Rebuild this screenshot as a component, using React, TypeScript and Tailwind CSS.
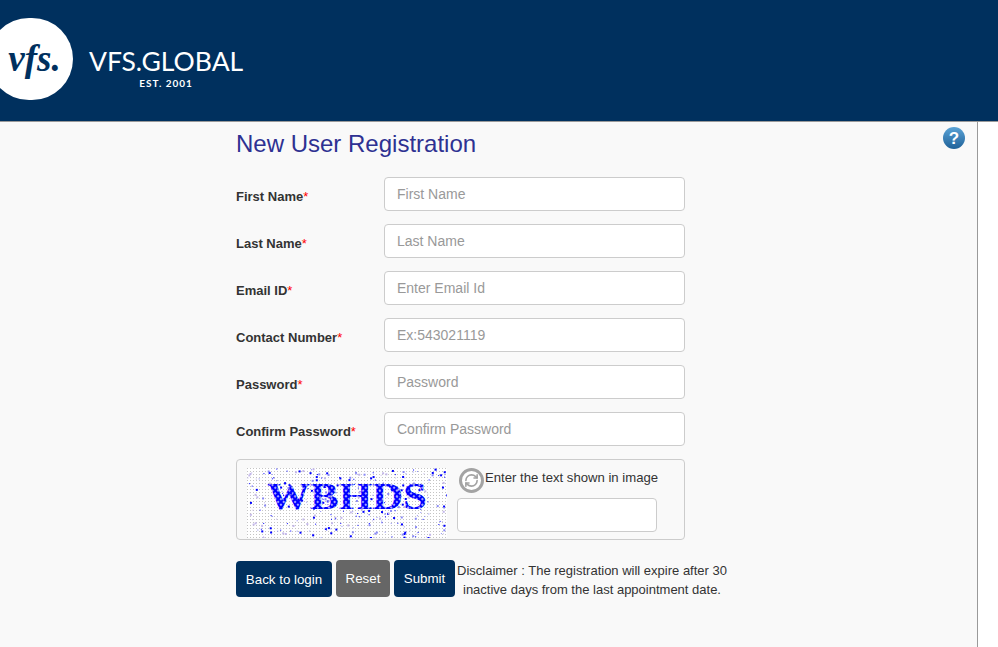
import { RefreshCw } from "lucide-react";

const fields = [
  { label: "First Name", placeholder: "First Name" },
  { label: "Last Name", placeholder: "Last Name" },
  { label: "Email ID", placeholder: "Enter Email Id" },
  { label: "Contact Number", placeholder: "Ex:543021119" },
  { label: "Password", placeholder: "Password" },
  { label: "Confirm Password", placeholder: "Confirm Password" },
];

// fixed noise for the captcha picture
function speckles() {
  let seed = 0x2f6e2b1;
  const next = () => {
    seed = (seed + 0x6d2b79f5) | 0;
    let t = Math.imul(seed ^ (seed >>> 15), 1 | seed);
    t = (t + Math.imul(t ^ (t >>> 7), 61 | t)) ^ t;
    return ((t ^ (t >>> 14)) >>> 0) / 4294967296;
  };
  return Array.from({ length: 330 }, () => ({
    x: next() * 200,
    y: next() * 70,
    size: next() > 0.55 ? 2 : 1,
    color: next() > 0.5 ? "#0000ff" : next() > 0.5 ? "#8a8af5" : "#c4b8ea",
  }));
}

function Captcha() {
  return (
    <svg width="200" height="70" viewBox="0 0 200 70" className="block">
      <defs>
        <pattern id="grain" width="3" height="3" patternUnits="userSpaceOnUse">
          <rect width="3" height="3" fill="#ffffff" />
          <rect width="1" height="1" fill="#c4c4c4" />
        </pattern>
        <pattern id="letters" width="4" height="4" patternUnits="userSpaceOnUse" patternTransform="rotate(45)">
          <rect width="4" height="4" fill="#0000ff" />
          <rect x="1.2" y="1.2" width="1.6" height="1.6" fill="#ffffff" />
        </pattern>
      </defs>
      <rect width="200" height="70" fill="url(#grain)" />
      <text
        x="20"
        y="41"
        fill="url(#letters)"
        fontFamily="'Liberation Serif', serif"
        fontWeight="700"
        fontSize="37"
        textLength="160"
        lengthAdjust="spacingAndGlyphs"
      >
        WBHDS
      </text>
      {speckles().map((s, i) => (
        <rect key={i} x={s.x} y={s.y} width={s.size} height={s.size} fill={s.color} />
      ))}
    </svg>
  );
}

export default function App() {
  return (
    <div className="min-h-[647px] bg-white font-['Liberation_Sans',Arial,sans-serif] text-[#333333]">
      <header className="flex h-[122px] items-center border-b border-[#9a9a9a] bg-[#00305e]">
        <div className="mt-[-4px] ml-[-12px] flex h-[82px] w-[85px] shrink-0 items-center justify-center rounded-full bg-white pl-2">
          <span className="font-['Liberation_Serif',serif] text-[37px] leading-none font-bold text-[#00305e] italic">
            vfs.
          </span>
        </div>
        <div className="ml-[16px] flex flex-col items-center pt-[14px] text-white">
          <span className="font-['Lato',sans-serif] text-[26.5px] leading-[30px] font-normal">VFS.GLOBAL</span>
          <span className="mt-[2px] font-['Lato',sans-serif] text-[10px] leading-[11px] font-bold tracking-[1px]">
            EST. 2001
          </span>
        </div>
      </header>

      <main className="relative min-h-[525px] w-[978px] border-r border-[#9a9a9a] bg-[#f9f9f9] pl-[236px]">
        <div className="absolute top-[5px] right-[12px] flex h-[22px] w-[22px] items-center justify-center rounded-full bg-gradient-to-b from-[#5aa3d6] to-[#1f6299] text-[17px] leading-none font-bold text-white">
          ?
        </div>

        <h1 className="pt-[8px] text-[24px] leading-[28px] text-[#2e3192]">New User Registration</h1>

        <form className="mt-[19px] w-[449px]">
          <div className="flex flex-col gap-[13px]">
            {fields.map((f) => (
              <div key={f.label} className="flex h-[34px] items-center">
                <label className="w-[148px] shrink-0 pt-[6px] text-[13px] font-bold">
                  {f.label}
                  <span className="font-normal text-[#ff0000]">*</span>
                </label>
                <input
                  placeholder={f.placeholder}
                  className="h-[34px] w-[301px] rounded border border-[#cccccc] bg-white px-3 text-[14px] placeholder:text-[#999999]"
                />
              </div>
            ))}
          </div>

          <div className="mt-[13px] flex h-[81px] rounded border border-[#cccccc] pt-2 pl-[10px]">
            <Captcha />
            <div className="ml-[10px] flex flex-col">
              <div className="flex items-start">
                <span className="ml-[2px] flex h-[25px] w-[25px] shrink-0 items-center justify-center rounded-full border-[3px] border-[#a3a3a3] bg-white">
                  <RefreshCw size={15} strokeWidth={2.6} className="text-[#a3a3a3]" />
                </span>
                <span className="ml-px text-[13.15px] leading-[20px] whitespace-nowrap">
                  Enter the text shown in image
                </span>
              </div>
              <input className="mt-[5px] h-[34px] w-[200px] rounded border border-[#cccccc] bg-white" />
            </div>
          </div>

          <div className="mt-[20px] flex h-[37px] w-[500px] items-start">
            <button type="button" className="mt-px h-[36px] w-[96px] rounded bg-[#00305e] pt-px text-[13.33px] text-white">
              Back to login
            </button>
            <button type="button" className="ml-1 h-[37px] w-[54px] rounded bg-[#666666] text-[13.33px] text-white">
              Reset
            </button>
            <button type="button" className="ml-1 h-[37px] w-[61px] rounded bg-[#00305e] text-[13.33px] text-white">
              Submit
            </button>
            <p className="mt-px ml-[2px] w-[270px] text-center text-[13px] leading-[19px]">
              Disclaimer : The registration will expire after 30 inactive days from the last appointment date.
            </p>
          </div>
        </form>
      </main>
    </div>
  );
}
